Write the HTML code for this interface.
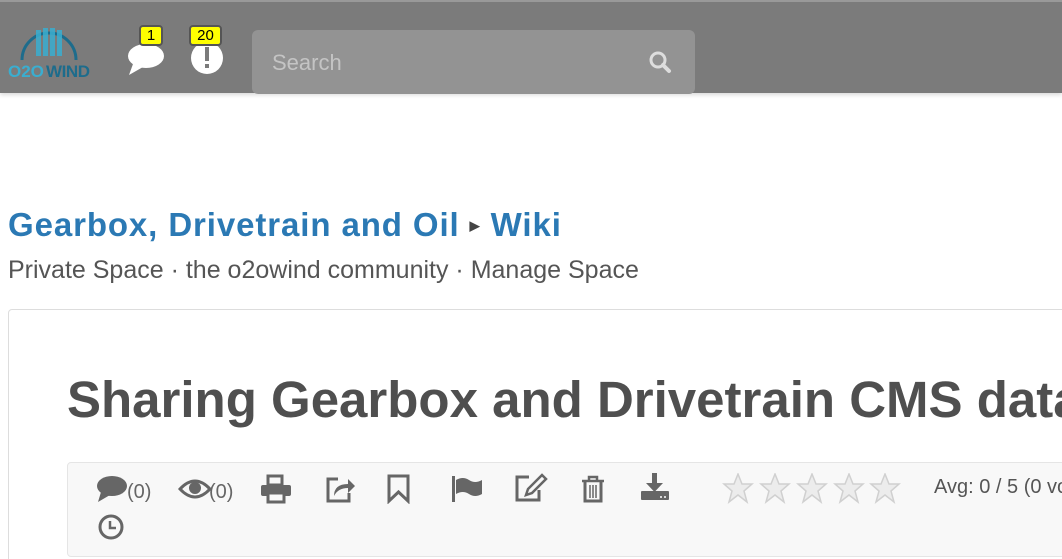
<!DOCTYPE html>
<html><head><style>
html,body{margin:0;width:1062px;height:559px;overflow:hidden}
body{background:#fff;font-family:"Liberation Sans",sans-serif;position:relative}
.hdr{position:absolute;left:0;top:0;width:1062px;height:93px;background:#7b7b7b;border-top:2px solid #999;box-sizing:border-box;box-shadow:0 2px 4px rgba(0,0,0,.15)}
.badge{position:absolute;background:#ff0;border:2px solid #555;border-radius:4px;font-size:15px;color:#000;text-align:center;line-height:17px;height:17px}
.search{position:absolute;left:252px;top:28px;width:443px;height:64px;background:#939393;border-radius:6px}
.search span{position:absolute;left:20px;top:20px;font-size:22px;color:#c4c4c4}
.a{position:absolute;white-space:nowrap}
.card{position:absolute;left:8px;top:309px;width:1070px;height:260px;border:1px solid #ddd;border-radius:4px}
.tb{position:absolute;left:67px;top:462px;width:1010px;height:93px;background:#f8f8f8;border:1px solid #e5e5e5;border-radius:4px}
svg{position:absolute}
</style></head><body>
<div class="hdr">
 <svg style="left:6px;top:14px" width="88" height="64" viewBox="0 0 88 64">
  <path d="M16 44 A27 27 0 0 1 70 44" fill="none" stroke="#1d6c8c" stroke-width="3"/>
  <g fill="#3aaed0" opacity=".85"><rect x="30" y="14" width="5" height="26"/><rect x="37" y="12" width="5" height="28"/><rect x="44" y="12" width="5" height="28"/><rect x="51" y="14" width="5" height="26"/></g>
  <text x="2" y="61" font-family="Liberation Sans" font-weight="bold" font-size="17" fill="#3aaed0">O2O</text>
  <text x="40" y="61" font-family="Liberation Sans" font-weight="bold" font-size="17" fill="#1d6c8c" textLength="44">WIND</text>
 </svg>
 <svg style="left:127px;top:40px" width="38" height="34" viewBox="0 0 38 34"><ellipse cx="19" cy="14" rx="18" ry="12" fill="#fff"/><path d="M6 22 L2 33 L16 25Z" fill="#fff"/></svg>
 <div class="badge" style="left:139px;top:23px;width:20px">1</div>
 <svg style="left:190px;top:39px" width="34" height="34"><circle cx="17" cy="17" r="16" fill="#fff"/><rect x="15" y="6" width="4" height="14" fill="#7b7b7b"/><rect x="15" y="23" width="4" height="4" fill="#7b7b7b"/></svg>
 <div class="badge" style="left:189px;top:23px;width:29px">20</div>
 <div class="search"><span>Search</span>
  <svg style="left:396px;top:20px" width="24" height="24"><circle cx="10" cy="10" r="7" fill="none" stroke="#ddd" stroke-width="3"/><path d="M15 15 L21 21" stroke="#ddd" stroke-width="4" stroke-linecap="round"/></svg></div>
</div>
<div class="a" style="left:8px;top:206px;font-size:33px;font-weight:bold;color:#2b79b4;letter-spacing:0.9px">Gearbox, Drivetrain and Oil <span style="font-size:13px;color:#444;position:relative;top:-6px">&#9654;</span> Wiki</div>
<div class="a" style="left:8px;top:256px;font-size:25px;color:#555">Private Space · the o2owind community · Manage Space</div>
<div class="card"></div>
<div class="a" style="left:67px;top:370px;font-size:51px;font-weight:bold;color:#4f4f4f">Sharing Gearbox and Drivetrain CMS data</div>
<div class="tb"></div>
<svg style="left:95px;top:474px" width="35" height="30"><ellipse cx="17" cy="12" rx="15" ry="10" fill="#666"/><path d="M6 18 L3 28 L15 21Z" fill="#666"/></svg>
<div class="a" style="left:127px;top:481px;font-size:20px;color:#666">(0)</div>
<svg style="left:178px;top:477px" width="34" height="24"><path d="M2 12 Q17 -4 32 12 Q17 28 2 12Z" fill="none" stroke="#666" stroke-width="3"/><circle cx="17" cy="11" r="6" fill="#666"/></svg>
<div class="a" style="left:209px;top:481px;font-size:20px;color:#666">(0)</div>
<svg style="left:260px;top:474px" width="32" height="30"><rect x="8" y="2" width="14" height="9" fill="none" stroke="#666" stroke-width="3"/><rect x="1" y="11" width="30" height="11" rx="2" fill="#666"/><rect x="8" y="19" width="16" height="9" fill="#f8f8f8" stroke="#666" stroke-width="3"/></svg>
<svg style="left:324px;top:474px" width="32" height="30"><path d="M14 5 H4 V27 H25 V19" fill="none" stroke="#666" stroke-width="3"/><path d="M10 22 Q10 10 24 10 V5 L31 12 L24 19 V14 Q14 14 10 22Z" fill="#666"/></svg>
<svg style="left:386px;top:474px" width="26" height="30"><path d="M3 2 H22 V27 L12.5 18 L3 27Z" fill="none" stroke="#666" stroke-width="3"/></svg>
<svg style="left:451px;top:474px" width="34" height="30"><rect x="1" y="2" width="3" height="26" fill="#666"/><path d="M5 6 Q12 2 18 6 T31 6 V20 Q24 24 18 20 T5 20Z" fill="#666"/></svg>
<svg style="left:514px;top:473px" width="34" height="30"><path d="M15 4 H3 V27 H25 V17" fill="none" stroke="#666" stroke-width="3"/><path d="M28 2 L32 6 L18 20 L12 22 L14 16Z" fill="none" stroke="#666" stroke-width="2.5"/></svg>
<svg style="left:580px;top:474px" width="26" height="30"><path d="M2 7 H24 M9 7 V3 H17 V7" fill="none" stroke="#666" stroke-width="2.5"/><path d="M5 8 V27 H21 V8" fill="none" stroke="#666" stroke-width="3"/><path d="M10 11V24M13 11V24M16 11V24" stroke="#666" stroke-width="1.5"/></svg>
<svg style="left:639px;top:472px" width="32" height="30"><rect x="13" y="1" width="5" height="11" fill="#666"/><path d="M7 11 H24 L15.5 20Z" fill="#666"/><rect x="2" y="19" width="28" height="9" rx="1" fill="#666"/><circle cx="22" cy="25" r="1" fill="#fff"/><circle cx="26" cy="25" r="1" fill="#fff"/></svg>
<svg style="left:722px;top:473px" width="180" height="32">
 <defs><path id="s" d="M15 1 L19 11 L29 11 L21 18 L24 29 L15 22 L6 29 L9 18 L1 11 L11 11Z" fill="#ececec" stroke="#d0d0d0" stroke-width="1.5"/></defs>
 <use href="#s" x="1"/><use href="#s" x="38"/><use href="#s" x="75"/><use href="#s" x="112"/><use href="#s" x="148"/>
</svg>
<div class="a" style="left:934px;top:476px;font-size:20px;color:#555">Avg: 0 / 5 (0 votes)</div>
<svg style="left:97px;top:513px" width="28" height="28"><circle cx="14" cy="14" r="11" fill="none" stroke="#666" stroke-width="3"/><path d="M13 8 V15 H19" fill="none" stroke="#666" stroke-width="2.5"/></svg>
</body></html>
